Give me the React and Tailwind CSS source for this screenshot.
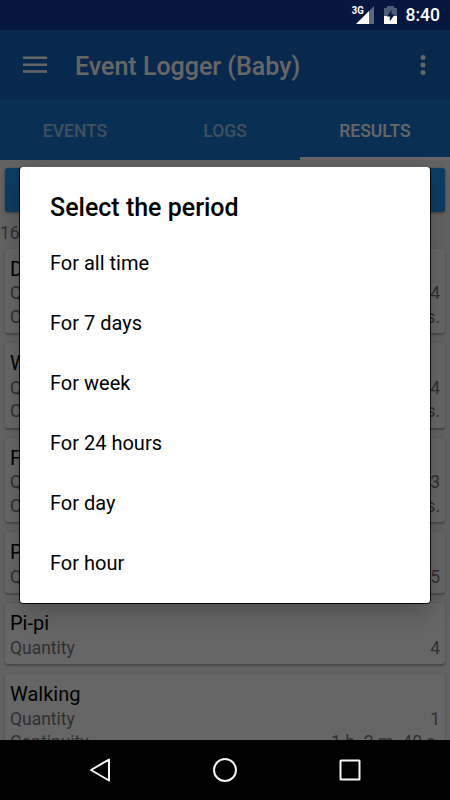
const tabs = ["EVENTS", "LOGS", "RESULTS"];

const periods = [
  "For all time",
  "For 7 days",
  "For week",
  "For 24 hours",
  "For day",
  "For hour",
];

const results = [
  { name: "D", quantity: 4, continuity: "s." },
  { name: "W", quantity: 4, continuity: "s." },
  { name: "F", quantity: 3, continuity: "s." },
  { name: "P", quantity: 5 },
  { name: "Pi-pi", quantity: 4 },
  { name: "Walking", quantity: 1, continuity: "1 h. 2 m. 40 s." },
];

function StatusIcons() {
  return (
    <div className="absolute top-0 right-0 z-20 flex h-[30px] w-[100px] text-white">
      <svg width="55" height="30" viewBox="350 0 55 30" aria-hidden="true">
        <path d="M374 6V24H369V11Z" fill="#fff" fillOpacity="0.35" />
        <path d="M369 11V24H356Z" fill="#fff" />
        <path d="M387 6V8H384V16H397V8H394V6Z" fill="#fff" fillOpacity="0.3" />
        <path d="M384 16H397V24H384Z" fill="#fff" />
        <path d="M391.5 10L387 16.6H389.8V21.5L394.5 14.4H391.5Z" fill="#05173f" />
        <text
          x="351.7"
          y="14"
          fill="#fff"
          textLength="12"
          lengthAdjust="spacingAndGlyphs"
          className="font-[Roboto,sans-serif] text-[10px] font-bold"
        >
          3G
        </text>
      </svg>
      <span className="pl-[0.5px] text-[17.5px] leading-[31px] font-medium">8:40</span>
    </div>
  );
}

function ResultCard({ result }) {
  return (
    <div className="shrink-0 rounded-[3px] bg-white px-[5px] pt-[5px] pb-1 shadow-[0_2px_2px_rgba(0,0,0,0.25),0_0_2px_rgba(0,0,0,0.15)]">
      <p className="h-[28.5px] text-[20px] leading-[30px] text-black">{result.name}</p>
      <div className="flex h-[23.5px] justify-between text-[17.5px] leading-[23.5px] text-[#7a7a7a]">
        <span>Quantity</span>
        <span>{result.quantity}</span>
      </div>
      {result.continuity && (
        <div className="flex h-[23.5px] justify-between text-[17.5px] leading-[23.5px] text-[#7a7a7a]">
          <span>Continuity</span>
          <span>{result.continuity}</span>
        </div>
      )}
    </div>
  );
}

function PeriodDialog() {
  return (
    <div className="absolute top-[167px] left-5 z-20 h-[436px] w-[410px] rounded-[3px] bg-white px-[30px] text-black shadow-[0_1px_0_0_rgba(0,0,0,0.9),1px_0_0_0_rgba(0,0,0,0.85),-1px_0_0_0_rgba(0,0,0,0.85),0_10px_22px_rgba(0,0,0,0.22)]">
      <h2 className="h-[67px] pt-[24px] text-[25px] leading-[33px] font-medium">
        Select the period
      </h2>
      <ul>
        {periods.map((period) => (
          <li key={period} className="h-[60px] text-[20px] leading-[59px]">
            {period}
          </li>
        ))}
      </ul>
    </div>
  );
}

export default function App() {
  return (
    <div className="relative flex h-[800px] w-[450px] flex-col overflow-hidden bg-black font-[Roboto,sans-serif]">
      <div className="relative flex h-[740px] flex-col overflow-hidden bg-[#f5f5f5]">
        <div className="h-[30px] shrink-0 bg-[#0d3a9e]" />

        <header className="flex h-[70px] shrink-0 items-center bg-[#1565c0] pr-[24.5px] pl-[23px] text-white">
          <svg width="24" height="18" viewBox="0 0 24 18" fill="currentColor" aria-hidden="true">
            <path d="M0 0.6H24V3.1H0ZM0 7.4H24V9.9H0ZM0 14.2H24V16.7H0Z" />
          </svg>
          <h1 className="ml-7 flex-1 pt-[3px] text-[25px] font-medium">Event Logger (Baby)</h1>
          <svg width="6" height="22" viewBox="0 0 6 22" fill="currentColor" aria-hidden="true">
            <circle cx="3" cy="3.5" r="2.5" />
            <circle cx="3" cy="11" r="2.5" />
            <circle cx="3" cy="18.5" r="2.5" />
          </svg>
        </header>

        <nav className="grid h-[60px] shrink-0 grid-cols-3 bg-[#1976d2] text-center text-[17.5px] leading-[62px] font-medium">
          {tabs.map((tab) => (
            <span
              key={tab}
              className={
                tab === "RESULTS"
                  ? "h-[60px] border-b-[3px] border-white text-white"
                  : "text-white/60"
              }
            >
              {tab}
            </span>
          ))}
        </nav>

        <main className="flex flex-1 flex-col overflow-hidden px-[5px] pt-2">
          <div className="h-11 shrink-0 rounded-[3px] bg-[#2196f3] shadow-[0_1px_3px_rgba(0,0,0,0.4)]" />
          <p className="-ml-[5px] h-[36.5px] shrink-0 text-[17.5px] leading-[42px] text-[#7a7a7a]">
            16
          </p>
          <div className="flex flex-col gap-[10px]">
            {results.map((result) => (
              <ResultCard key={result.name} result={result} />
            ))}
          </div>
        </main>

        <div className="absolute inset-0 z-10 bg-black/60" />
      </div>

      <StatusIcons />
      <PeriodDialog />

      <footer className="flex h-[60px] items-center bg-black">
        <svg width="450" height="60" viewBox="0 740 450 60" fill="none" stroke="#f5f5f5" strokeWidth="2" aria-hidden="true">
          <path d="M109 759.5V780.5L91 770Z" strokeLinejoin="round" />
          <circle cx="225" cy="770" r="11" />
          <rect x="340.5" y="760.5" width="19" height="19" rx="0.5" />
        </svg>
      </footer>
    </div>
  );
}
